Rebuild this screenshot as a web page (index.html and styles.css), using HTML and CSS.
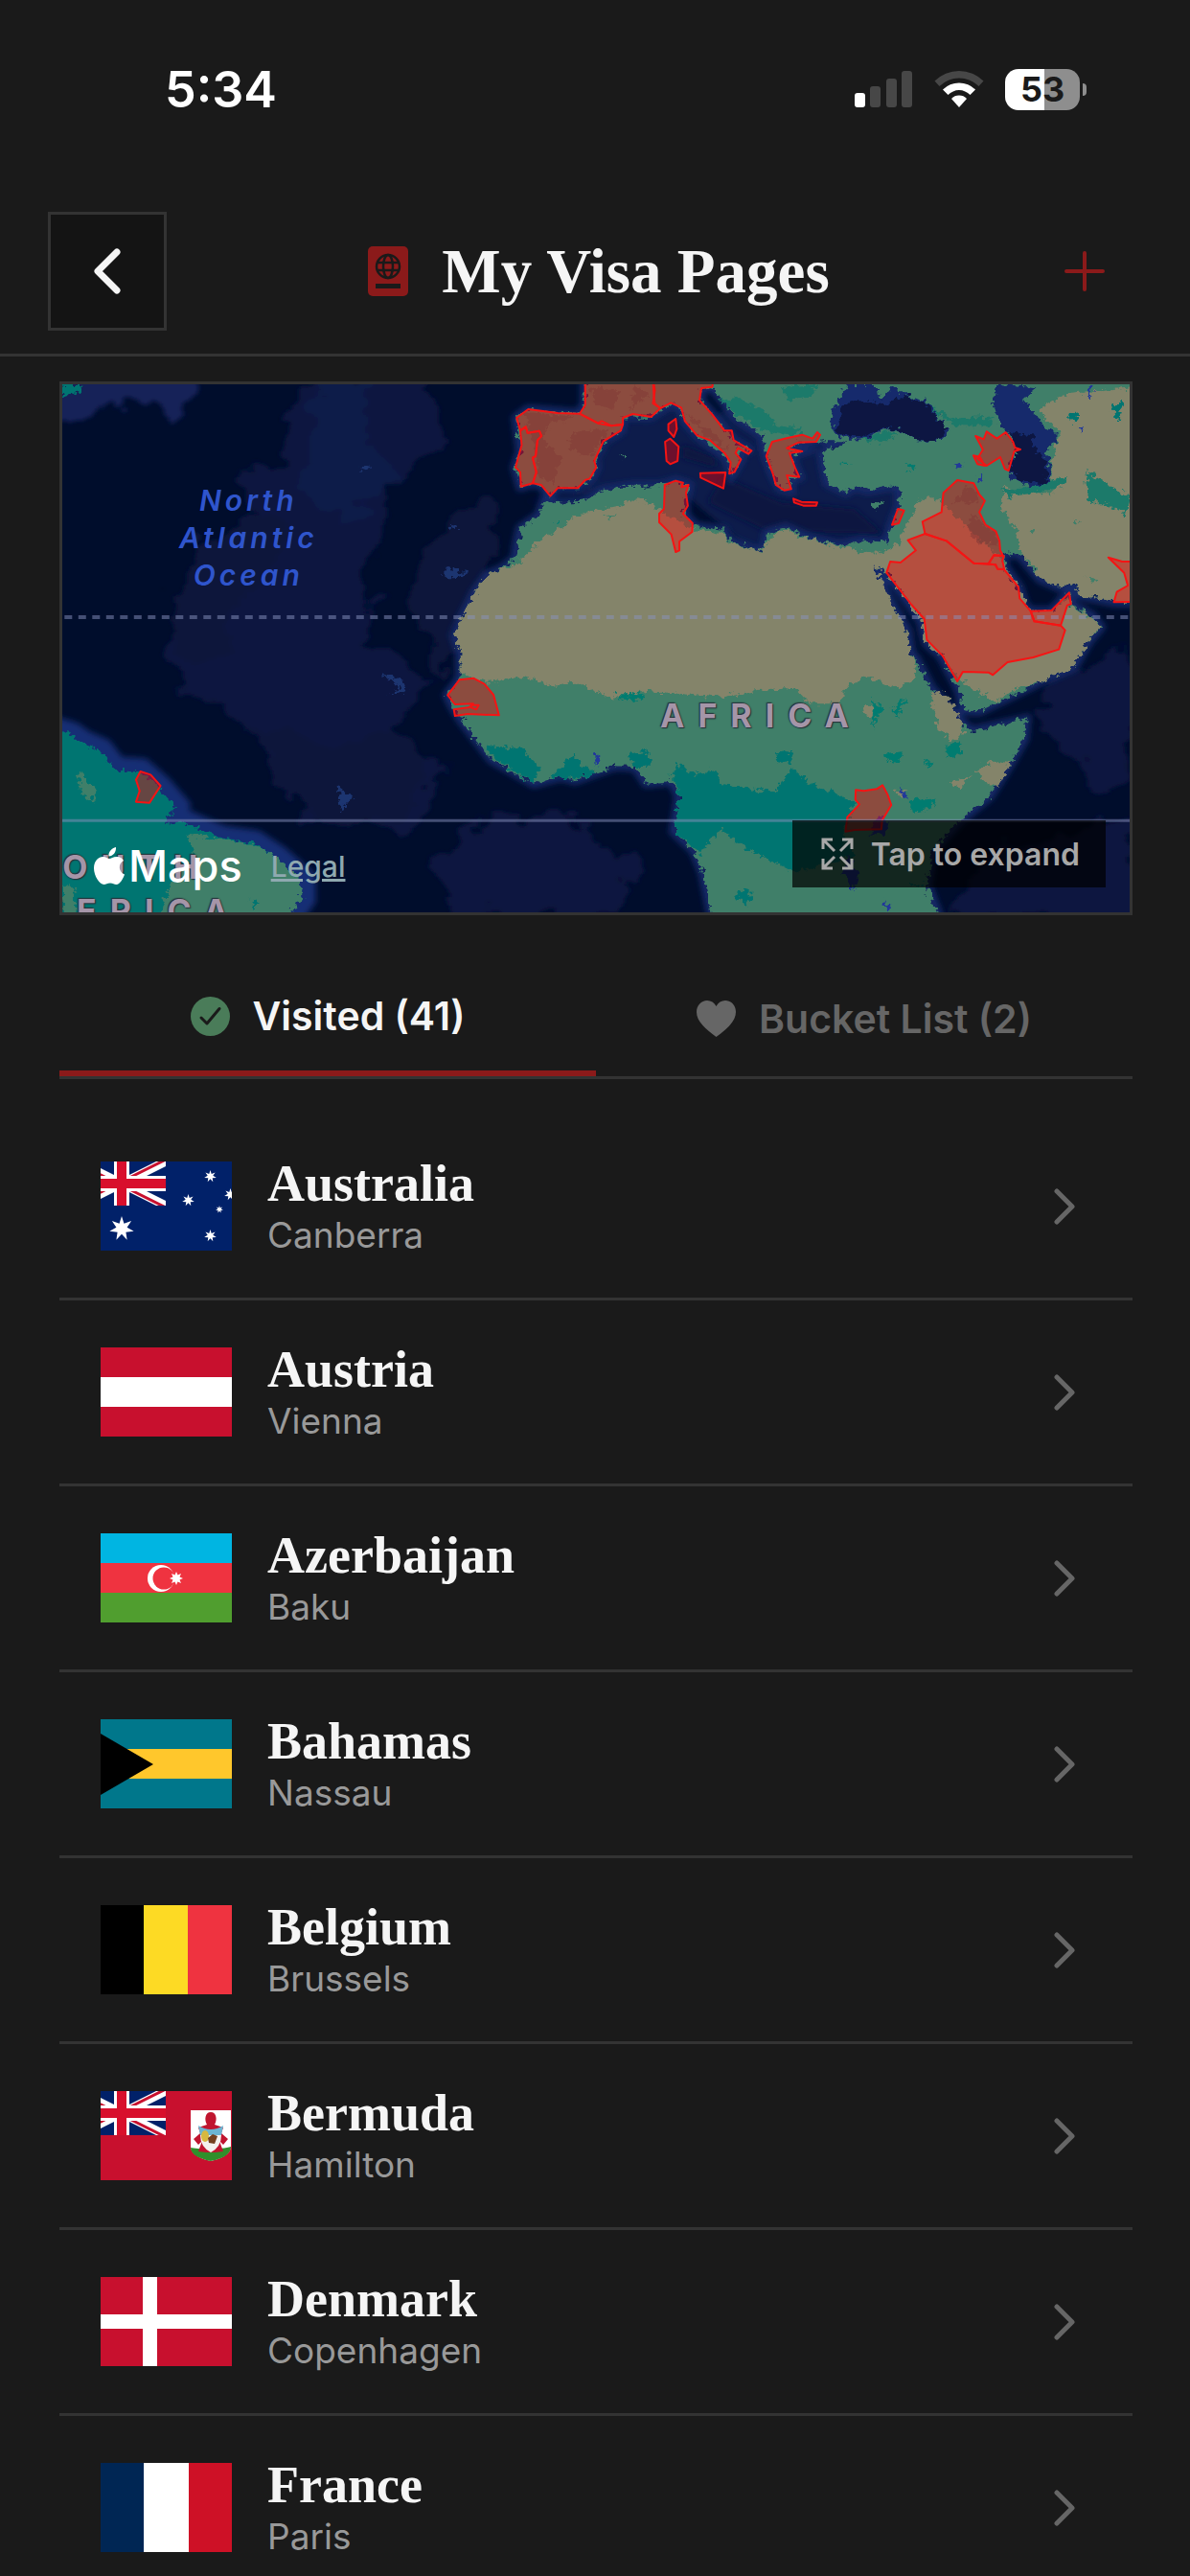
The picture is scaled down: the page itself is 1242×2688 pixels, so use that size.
FILE: index.html
```html
<!DOCTYPE html>
<html lang="en">
<head>
    <meta charset="UTF-8">
    <meta name="viewport" content="width=device-width, initial-scale=1.0">
    <title>My Visa Pages</title>
    <link rel="stylesheet" href="styles.css">
</head>
<body>
    <!-- Shared shapes -->
    <svg class="defs" aria-hidden="true">
        <symbol id="chevron" viewBox="0 0 22 38">
            <path d="M3 3 L19 19 L3 35" fill="none" stroke="#666" stroke-width="5" stroke-linecap="round" stroke-linejoin="round"/>
        </symbol>
        <symbol id="star7" viewBox="-10 -10 20 20">
            <polygon fill="#fff" points="0,-10 1.9,-4 7.8,-6.2 4.3,-1 9.7,2.2 3.4,2.8 4.3,9 0,4.4 -4.3,9 -3.4,2.8 -9.7,2.2 -4.3,-1 -7.8,-6.2 -1.9,-4"/>
        </symbol>
        <symbol id="canton" viewBox="0 0 68 46">
            <rect width="68" height="46" fill="#012169"/>
            <path d="M-24 0 L68 46 M-24 46 L68 0" stroke="#fff" stroke-width="9"/>
            <path d="M-24 2 L22 25 L68 48 M-24 44 L22 21 L68 -2" stroke="#c8102e" stroke-width="3"/>
            <path d="M22 0 V46 M0 23 H68" stroke="#fff" stroke-width="16"/>
            <path d="M22 0 V46 M0 23 H68" stroke="#d80f2c" stroke-width="10"/>
        </symbol>
    </svg>

    <div class="screen">
        <div class="status-bar">
            <span class="time">5:34</span>
            <div class="status-icons">
                <svg width="62" height="40" viewBox="0 0 62 40" aria-hidden="true">
                    <rect x="1" y="24" width="11" height="15" rx="3" fill="#fff"/>
                    <rect x="17" y="17" width="11" height="22" rx="3" fill="#474747"/>
                    <rect x="34" y="9" width="11" height="30" rx="3" fill="#474747"/>
                    <rect x="50" y="1" width="11" height="38" rx="3" fill="#474747"/>
                </svg>
                <svg width="52" height="40" viewBox="0 0 52 40" aria-hidden="true">
                    <path d="M0.500 11.500 A36 36 0 0 1 51.500 11.500 L46.500 17 A29 29 0 0 0 5.500 17 Z" fill="#474747"/>
                    <path d="M9 20.500 A24 24 0 0 1 43 20.500 L37.500 26 A16 16 0 0 0 14.500 26 Z" fill="#fff"/>
                    <path d="M18 30 A11 11 0 0 1 34 30 L26 39 Z" fill="#fff"/>
                </svg>
                <div class="battery"><span>53</span></div>
            </div>
        </div>

        <header class="header">
            <button class="back-button" aria-label="Back">
                <svg width="28" height="48" viewBox="0 0 28 48"><path d="M24 4 L4 24 L24 44" fill="none" stroke="#f5f5f5" stroke-width="7" stroke-linecap="round" stroke-linejoin="round"/></svg>
            </button>
            <div class="title">
                <svg width="42" height="52" viewBox="0 0 42 52" aria-hidden="true">
                    <rect width="42" height="52" rx="5" fill="#8b1a1a"/>
                    <g fill="none" stroke="#1a1a1a" stroke-width="2.500">
                        <circle cx="21" cy="21" r="12"/>
                        <ellipse cx="21" cy="21" rx="5" ry="12"/>
                        <path d="M10 17 H32 M10 25 H32"/>
                    </g>
                    <rect x="8" y="39" width="26" height="5" fill="#1a1a1a"/>
                </svg>
                <h1>My Visa Pages</h1>
            </div>
            <button class="add-button" aria-label="Add country">
                <svg width="44" height="44" viewBox="0 0 44 44"><path d="M22 3 V41 M3 22 H41" stroke="#8b1a1a" stroke-width="4" stroke-linecap="round"/></svg>
            </button>
        </header>

        <main class="content">
            <section class="map" aria-label="Map of visited countries">
                <svg class="map-canvas" viewBox="39 30 2911 1653" preserveAspectRatio="none" aria-hidden="true">
                    <defs>
                        <filter id="rough" x="-5%" y="-5%" width="110%" height="110%">
                            <feTurbulence type="fractalNoise" baseFrequency="0.06" numOctaves="3" seed="4"/>
                            <feDisplacementMap in="SourceGraphic" scale="34" xChannelSelector="R" yChannelSelector="G"/>
                        </filter>
                        <filter id="deep" x="-5%" y="-5%" width="110%" height="110%">
                            <feTurbulence type="fractalNoise" baseFrequency="0.012" numOctaves="4" seed="9"/>
                            <feDisplacementMap in="SourceGraphic" scale="130" xChannelSelector="R" yChannelSelector="G" result="d"/>
                            <feGaussianBlur in="d" stdDeviation="7"/>
                        </filter>
                        <filter id="soft"><feGaussianBlur stdDeviation="9"/></filter>
                        <path id="land" d="M1355 392 L1385 402 1457 398 1512 362 1587 348 1677 345 1712 332 1747 345 1737 400 1737 440 1767 475 1842 485 1857 515 1937 555 1957 535 1962 495 2012 478 2077 512 2157 535 2217 520 2287 528 2302 470 2322 410 2322 350 2292 350 2237 362 2197 350 2177 368 2127 340 2117 290 2112 250 2137 225 2170 222 2170 208 2120 208 2102 212 2047 212 2017 230 2057 240 2027 250 2037 290 2049 320 2022 330 2025 362 1997 355 1977 310 1959 255 1947 190 1877 135 1837 75 1812 38 1782 45 1777 80 1812 125 1847 175 1867 205 1919 240 1882 232 1889 265 1865 310 1852 260 1777 195 1737 145 1727 105 1699 90 1642 132 1567 130 1562 175 1520 205 1490 270 1495 290 1480 325 1445 355 1390 355 1370 380 1345 345 1320 340 1290 350 1275 290 1290 240 1278 135 1310 108 1450 122 1465 90 1465 0 2990 0 2990 715 2907 712 2812 690 2802 655 2757 665 2707 640 2677 600 2652 565 2607 555 2607 600 2647 665 2662 720 2677 740 2737 740 2782 685 2792 720 2847 755 2870 790 2837 835 2797 915 2697 965 2637 1000 2537 1055 2497 1050 2487 990 2437 880 2397 840 2382 770 2287 620 2287 590 2282 625 2242 572 2257 620 2307 730 2342 800 2352 870 2367 890 2407 980 2487 1080 2517 1115 2667 1078 2662 1140 2622 1220 2567 1320 2487 1395 2412 1490 2397 1600 2437 1720 1815 1720 1809 1683 1787 1560 1762 1490 1707 1430 1722 1320 1702 1272 1632 1280 1602 1228 1547 1225 1437 1270 1400 1258 1325 1280 1210 1205 1130 1085 1105 1040 1090 1003 1125 950 1125 870 1108 815 1130 760 1165 680 1200 625 1235 610 1275 575 1280 530 1290 480 1340 440 Z"/>
                        <path id="america" d="M0 1105 L60 1125 90 1150 140 1175 180 1235 250 1240 300 1290 345 1350 320 1410 370 1400 470 1450 560 1465 620 1510 690 1580 690 1640 640 1720 0 1720 Z"/>
                    </defs>

                    <!-- Ocean floor -->
                    <rect x="0" y="0" width="3000" height="1720" fill="#000d2c"/>
                    <g filter="url(#deep)">
                        <path fill="#0b163f" d="M1060 0 L700 0 640 260 520 300 560 560 430 640 330 860 380 1000 560 1100 640 1280 700 1400 1000 1420 1080 1240 960 1120 1040 960 860 830 900 560 940 330 1060 250 Z"/>
                        <path fill="#0e1d4a" d="M740 0 L900 0 860 220 950 330 800 460 700 400 Z"/>
                        <path fill="#11143a" d="M420 500 L640 440 620 640 480 720 500 860 380 900 340 700 Z M560 1080 L760 1160 1000 1140 1040 1280 900 1420 700 1380 Z M1020 560 L1200 380 1230 620 1060 960 980 700 Z"/>
                        <path fill="#0b163f" d="M1130 1420 L1380 1380 1620 1520 1520 1700 1120 1700 1040 1560 Z M2700 1000 L2960 840 2960 1250 2860 1300 2740 1140 Z M2560 1500 L2960 1380 2960 1700 2460 1700 Z"/>
                        <path fill="#132058" d="M0 0 L400 0 350 150 240 80 120 100 0 200 Z"/>
                    </g>
                    <g fill="#1d3470" filter="url(#rough)">
                        <path d="M840 290 L860 284 880 290 860 296 Z M1090 470 L1120 476 1108 490 Z M1080 605 L1150 620 1120 634 1080 634 Z M910 935 L970 960 980 990 935 1000 960 980 Z M790 1290 L830 1320 800 1370 Z"/>
                    </g>

                    <!-- Inland seas and shelf water -->
                    <path fill="#0c1c4c" filter="url(#soft)" d="M1300 400 L1460 360 1570 120 1700 80 1800 150 1900 60 2050 200 2330 330 2320 540 1940 570 1700 340 Z"/>
                    <path fill="#071340" filter="url(#soft)" d="M1840 320 L2000 400 2200 420 2280 500 1960 490 1800 400 Z M1730 220 L1820 260 1820 290 1730 260 Z"/>
                    <use href="#land" fill="none" stroke="#152a6a" stroke-width="26" filter="url(#soft)"/>
                    <use href="#america" fill="none" stroke="#182d75" stroke-width="80" filter="url(#soft)"/>

                    <g filter="url(#rough)">
                        <use href="#land" fill="#3f7f69"/>
                        <use href="#america" fill="#007571"/>
                        <path fill="#007571" d="M30 30 L90 30 85 55 40 72 Z"/>
                        <path fill="#3f7f69" d="M2245 405 L2275 398 2265 415 2250 420 Z M1560 250 L1578 256 1568 268 Z"/>

                        <!-- Sahara -->
                        <path fill="#84846a" d="M1285 590 L1340 520 1400 480 1440 440 1560 410 1600 390 1640 400 1690 440 1740 470 1767 485 1842 498 1857 522 1937 555 1957 540 1975 500 2012 485 2077 515 2150 537 2200 545 2250 560 2310 540 2340 480 2370 400 2400 378 2440 400 2500 470 2590 560 2607 600 2647 665 2677 740 2737 740 2782 700 2792 725 2847 760 2868 790 2837 835 2797 915 2697 965 2637 985 2580 1025 2520 980 2487 960 2437 880 2397 840 2382 770 2287 620 2250 590 2307 730 2342 800 2352 870 2367 920 2360 960 2300 980 2230 940 2177 980 2157 1030 2077 1030 2037 980 1937 990 1837 1010 1737 1000 1637 990 1537 1010 1437 965 1380 975 1300 945 1200 965 1125 935 1125 870 1108 815 1130 760 1165 680 1200 625 Z"/>
                        <!-- Iran and Central Asia -->
                        <path fill="#84846a" d="M2610 350 L2660 370 2740 370 2740 260 2760 180 2700 110 2780 60 2990 40 2990 715 2907 712 2812 690 2802 655 2757 665 2707 640 2677 600 2652 565 2640 480 2600 420 Z"/>
                        <path fill="#84846a" d="M2407 995 L2450 1000 2495 1090 2500 1130 2460 1145 2430 1110 Z M2535 1230 L2580 1208 2625 1215 2590 1290 2550 1275 Z M2455 1280 L2520 1255 2490 1290 Z M2310 1305 L2345 1300 2330 1325 Z M2225 1035 L2250 1040 2245 1070 2228 1065 Z"/>

                        <!-- Woodland -->
                        <path fill="#1f7a6b" d="M1830 80 L1880 70 1960 120 1990 160 2060 170 2040 190 1960 180 1900 140 Z M2000 40 L2100 30 2080 70 2020 80 Z M2220 200 L2290 175 2320 190 2260 215 Z M2320 80 L2400 90 2470 140 2580 130 2570 160 2480 160 2400 110 Z M2600 360 L2680 350 2780 320 2770 345 2700 370 2620 380 Z M2830 300 L2900 350 2950 380 2940 440 2880 400 2840 400 Z"/>
                        <path fill="#007571" d="M1707 1430 L1722 1320 1700 1250 1715 1215 1760 1250 1820 1240 1835 1280 1930 1300 1990 1300 2027 1230 2080 1280 2150 1310 2200 1340 2170 1430 2200 1500 2100 1540 2037 1560 1900 1480 1830 1420 1780 1500 Z M1190 1160 L1290 1170 1340 1230 1325 1280 1230 1210 Z M1370 1260 L1430 1190 1490 1250 1437 1265 Z M1580 1190 L1640 1180 1640 1230 1600 1230 Z M1985 1180 L2030 1175 2025 1215 1995 1210 Z"/>
                        <path fill="#007b70" d="M2280 1190 L2330 1180 2320 1215 2290 1210 Z M2450 1160 L2490 1150 2490 1190 2450 1200 Z M2350 1330 L2420 1325 2410 1360 2360 1370 Z M2390 1210 L2415 1215 2400 1230 Z M2250 1020 L2280 1040 2250 1100 Z M2300 1050 L2340 1010 2320 1070 Z M1550 1000 L1630 1000 1610 1020 1560 1015 Z M1380 460 L1400 455 1390 472 Z M2160 275 L2190 275 2175 285 Z M2340 280 L2370 285 2350 300 Z"/>
                        <path fill="#3f7f69" d="M85 1240 L110 1270 130 1300 120 1335 85 1300 Z M380 1440 L560 1470 620 1510 690 1580 690 1640 655 1700 300 1700 340 1580 400 1500 Z M39 1600 L75 1610 70 1700 39 1700 Z M1515 440 L1545 440 1530 452 Z M2680 490 L2695 480 2690 500 Z M2665 570 L2695 600 2690 620 Z M2830 635 L2865 640 2850 650 Z M2795 455 L2815 460 2800 470 Z M2190 525 L2230 520 2240 540 2210 558 Z"/>
                        <path fill="#007571" d="M1880 1610 L1920 1620 1910 1660 1880 1640 Z M2350 1590 L2385 1590 2380 1610 Z M550 1640 L580 1650 560 1670 Z M2780 130 L2810 120 2800 150 Z M2900 90 L2935 90 2915 150 Z"/>

                        <!-- Black Sea, Caspian, Gulf and lakes -->
                        <path fill="#142a6c" d="M2180 30 L2260 30 2270 80 2300 40 2340 62 2400 90 2459 180 2427 208 2367 205 2317 172 2277 172 2227 200 2150 195 2135 150 2150 90 Z"/>
                        <path fill="#0a1843" d="M2160 100 L2200 80 2280 90 2340 66 2397 95 2450 165 2430 205 2370 203 2317 170 2277 168 2227 192 2150 185 Z"/>
                        <path fill="#142a6c" d="M2590 30 L2700 40 2660 80 2700 130 2720 170 2750 180 2750 210 2720 240 2738 290 2735 340 2680 352 2620 320 2625 270 2650 230 2600 160 2575 90 Z"/>
                        <path fill="#0a1843" d="M2620 180 L2680 190 2700 240 2725 280 2720 345 2650 330 2625 300 2640 240 Z"/>
                        <path fill="#20389a" d="M2470 285 L2500 275 2490 295 Z M2535 300 L2552 330 2540 335 Z M2810 160 L2828 170 2820 185 Z M2840 30 L2850 30 2845 75 2838 75 Z M2265 1380 L2300 1400 2280 1440 2240 1430 Z M2185 1500 L2210 1570 2195 1620 2170 1560 Z M2280 1640 L2300 1670 2290 1690 Z M2322 1280 L2345 1330 2330 1325 Z M1493 1190 L1503 1190 1503 1225 1493 1225 Z"/>
                    </g>

                    <!-- Darker ground under the visited countries -->
                    <path fill="#2f5f5a" opacity="0.500" filter="url(#rough)" d="M1300 120 L1440 130 1370 150 1350 200 1400 260 1380 340 1340 320 1320 200 Z M1430 180 L1530 170 1480 260 1420 230 Z M1480 40 L1560 50 1540 110 1490 90 Z M1600 30 L1640 60 1590 110 Z M1740 120 L1830 200 1860 240 1800 200 Z M2500 350 L2535 370 2540 400 2470 400 Z M2520 440 L2590 500 2590 540 2530 520 2505 480 Z"/>

                    <!-- Visited countries -->
                    <g class="visited">
                        <path d="M1278 135 L1310 108 1390 120 1450 122 1500 152 1535 160 1568 156 1562 175 1515 208 1490 270 1495 290 1478 325 1465 330 1445 355 1390 355 1370 380 1345 345 1322 340 1332 305 1322 260 1330 255 1335 205 1346 192 1340 176 1308 182 1303 163 1288 175 Z"/>
                        <path d="M1288 175 L1303 163 1308 182 1340 176 1346 192 1335 205 1330 255 1322 260 1332 305 1322 340 1290 350 1288 305 1275 290 1292 220 Z"/>
                        <path d="M1465 10 L1465 95 1450 122 1500 152 1510 145 1537 160 1568 156 1568 135 1595 123 1645 132 1670 105 1650 90 1655 50 1650 10 Z"/>
                        <path d="M1650 10 L1652 60 1655 90 1670 105 1699 88 1727 103 1737 145 1770 190 1805 205 1845 245 1862 275 1858 310 1872 305 1890 265 1875 245 1882 230 1910 248 1919 238 1870 205 1865 175 1845 175 1812 125 1777 80 1782 42 1812 38 1815 10 Z"/>
                        <path d="M1712 138 L1692 155 1692 175 1707 195 1715 170 Z M1697 200 L1683 210 1687 270 1697 280 1717 270 1720 225 Z M1779 308 L1848 306 1842 356 1780 322 Z"/>
                        <path d="M1959 255 L1975 210 2017 198 2057 188 2085 200 2098 180 2106 188 2095 210 2047 212 2015 230 2057 240 2022 245 2037 290 2049 320 2015 315 2027 358 2008 362 1985 345 1977 310 Z M2033 388 L2055 398 2098 400 2095 410 2060 410 2035 400 Z"/>
                        <path d="M1682 345 L1712 332 1732 338 1728 352 1747 345 1740 370 1745 410 1732 435 1758 465 1757 492 1722 522 1722 550 1712 555 1700 500 1667 462 1667 435 1680 420 Z"/>
                        <path d="M2318 420 L2335 425 2320 465 2302 470 Z"/>
                        <path d="M2530 192 L2552 202 2560 178 2588 200 2612 180 2632 210 2637 228 2652 234 2635 240 2620 300 2610 295 2597 258 2560 285 2535 262 2550 235 Z M2524 253 L2542 258 2555 285 2535 280 Z"/>
                        <path d="M2480 330 L2525 340 2540 375 2555 395 2540 430 2557 470 2585 490 2595 520 2597 550 2605 567 2580 565 2565 592 2525 590 2450 520 2392 498 2385 460 2437 430 2442 370 Z"/>
                        <path d="M2392 498 L2450 520 2525 590 2585 595 2590 608 2608 610 2647 665 2650 700 2680 740 2690 772 2762 785 2774 800 2757 860 2687 885 2617 900 2577 940 2565 932 2495 930 2480 960 2440 880 2397 830 2390 765 2355 720 2287 620 2297 585 2325 588 2367 550 2345 518 Z"/>
                        <path d="M2580 565 L2607 568 2603 582 2608 608 2590 608 2583 595 2565 592 Z M2680 740 L2737 738 2785 682 2790 718 2780 722 2762 785 2690 772 Z M2892 572 L2930 585 2980 585 2980 710 2907 712 2915 680 2945 660 2935 620 Z"/>
                        <path d="M1090 1003 L1122 955 1160 950 1190 968 1215 1002 1230 1066 1145 1062 1110 1068 1107 1048 1145 1042 1160 1034 1175 1034 1168 1048 1150 1040 1160 1030 1110 1032 Z"/>
                        <path d="M2203 1300 L2225 1303 2260 1297 2276 1285 2290 1315 2300 1347 2275 1395 2273 1423 2200 1425 2175 1430 2180 1385 2213 1345 2202 1330 Z"/>
                        <path d="M252 1242 L280 1252 307 1287 277 1340 240 1337 250 1303 240 1268 Z"/>
                    </g>

                    <path class="tropic" d="M45 759 H2950"/>
                    <path class="equator" d="M39 1396 H2950"/>
                </svg>

                <span class="map-label ocean-label">North<br>Atlantic<br>Ocean</span>
                <span class="map-label africa-label">AFRICA</span>
                <span class="map-label south-label">SOUTH</span>
                <span class="map-label america-label">AMERICA</span>

                <div class="attribution">
                    <div class="brand">
                        <svg width="32" height="40" viewBox="0 0 32 40" aria-hidden="true">
                            <path fill="#fff" d="M23 0 C23.500 5 20 9.500 15.500 9.500 C15 5 18.500 1 23 0 Z M16 12 C18 12 20 10 24 10 C27 10 29.500 11.500 31 14 C25 17 25.500 26 32 28.500 C30.500 33 27 39 23.500 39 C21 39 20 37.500 17 37.500 C14 37.500 12.500 39 10.500 39 C6 39 0 30 0 22 C0 14 5 10 9.500 10 C12.500 10 14.500 12 16 12 Z"/>
                        </svg>
                        <span>Maps</span>
                    </div>
                    <a class="legal" href="#legal">Legal</a>
                </div>

                <button class="expand-button">
                    <svg width="34" height="34" viewBox="0 0 34 34" fill="none" stroke="#a8a8a8" stroke-width="3" aria-hidden="true">
                        <path d="M2 12 V2 H12 M2 2 L14 14 M22 2 H32 V12 M32 2 L20 14 M2 22 V32 H12 M2 32 L14 20 M22 32 H32 V22 M32 32 L20 20"/>
                    </svg>
                    Tap to expand
                </button>
            </section>

            <div class="tabs" role="tablist">
                <button class="tab active" role="tab" aria-selected="true">
                    <svg width="41" height="41" viewBox="0 0 41 41" aria-hidden="true">
                        <circle cx="20.500" cy="20.500" r="20.500" fill="#4a7c59"/>
                        <path d="M11 22 L17 28 L30 12.500" fill="none" stroke="#1a1a1a" stroke-width="3" stroke-linecap="round" stroke-linejoin="round"/>
                    </svg>
                    Visited (41)
                </button>
                <button class="tab" role="tab" aria-selected="false">
                    <svg width="41" height="38" viewBox="0 0 41 38" aria-hidden="true">
                        <path fill="#666" d="M20.500 38 C10 30 0 22 0 12 C0 5 5 0 11 0 C15 0 18.500 2 20.500 6 C22.500 2 26 0 30 0 C36 0 41 5 41 12 C41 22 31 30 20.500 38 Z"/>
                    </svg>
                    Bucket List (2)
                </button>
            </div>

            <ul class="countries">
                <li>
                    <a class="country" href="#australia">
                        <svg class="flag" viewBox="0 0 137 93" aria-hidden="true">
                            <rect width="137" height="93" fill="#012169"/>
                            <use href="#canton" width="68" height="46"/>
                            <use href="#star7" x="9" y="57" width="26" height="26"/>
                            <use href="#star7" x="108" y="9" width="13" height="13"/>
                            <use href="#star7" x="85" y="34" width="13" height="13"/>
                            <use href="#star7" x="129" y="28" width="13" height="13"/>
                            <use href="#star7" x="108" y="71" width="13" height="13"/>
                            <use href="#star7" x="120" y="46" width="8" height="8"/>
                        </svg>
                        <span class="info">
                            <span class="name">Australia</span>
                            <span class="capital">Canberra</span>
                        </span>
                        <svg class="chevron" aria-hidden="true"><use href="#chevron"/></svg>
                    </a>
                </li>
                <li>
                    <a class="country" href="#austria">
                        <svg class="flag" viewBox="0 0 137 93" aria-hidden="true">
                            <rect width="137" height="93" fill="#c8102e"/>
                            <rect y="31" width="137" height="31" fill="#fff"/>
                        </svg>
                        <span class="info">
                            <span class="name">Austria</span>
                            <span class="capital">Vienna</span>
                        </span>
                        <svg class="chevron" aria-hidden="true"><use href="#chevron"/></svg>
                    </a>
                </li>
                <li>
                    <a class="country" href="#azerbaijan">
                        <svg class="flag" viewBox="0 0 137 93" aria-hidden="true">
                            <rect width="137" height="31" fill="#00b5e2"/>
                            <rect y="31" width="137" height="31" fill="#ef3340"/>
                            <rect y="62" width="137" height="31" fill="#509e2f"/>
                            <circle cx="63" cy="47" r="14" fill="#fff"/>
                            <circle cx="66" cy="47" r="11.500" fill="#ef3340"/>
                            <polygon fill="#fff" points="79,40 80.500,43.500 84,42 82.500,45.500 86,47 82.500,48.500 84,52 80.500,50.500 79,54 77.500,50.500 74,52 75.500,48.500 72,47 75.500,45.500 74,42 77.500,43.500"/>
                        </svg>
                        <span class="info">
                            <span class="name">Azerbaijan</span>
                            <span class="capital">Baku</span>
                        </span>
                        <svg class="chevron" aria-hidden="true"><use href="#chevron"/></svg>
                    </a>
                </li>
                <li>
                    <a class="country" href="#bahamas">
                        <svg class="flag" viewBox="0 0 137 93" aria-hidden="true">
                            <rect width="137" height="93" fill="#00778b"/>
                            <rect y="31" width="137" height="31" fill="#ffc72c"/>
                            <path d="M0 15 L55 47 L0 79 Z" fill="#000"/>
                        </svg>
                        <span class="info">
                            <span class="name">Bahamas</span>
                            <span class="capital">Nassau</span>
                        </span>
                        <svg class="chevron" aria-hidden="true"><use href="#chevron"/></svg>
                    </a>
                </li>
                <li>
                    <a class="country" href="#belgium">
                        <svg class="flag" viewBox="0 0 137 93" aria-hidden="true">
                            <rect width="46" height="93" fill="#000"/>
                            <rect x="45" width="46" height="93" fill="#fdda24"/>
                            <rect x="91" width="46" height="93" fill="#ef3340"/>
                        </svg>
                        <span class="info">
                            <span class="name">Belgium</span>
                            <span class="capital">Brussels</span>
                        </span>
                        <svg class="chevron" aria-hidden="true"><use href="#chevron"/></svg>
                    </a>
                </li>
                <li>
                    <a class="country" href="#bermuda">
                        <svg class="flag" viewBox="0 0 137 93" aria-hidden="true">
                            <rect width="137" height="93" fill="#c8102e"/>
                            <use href="#canton" width="68" height="46"/>
                            <path d="M94 20 H136 V58 C136 66 125 71 115 73 C105 71 94 66 94 58 Z" fill="#fff"/>
                            <path d="M94 59 C102 61 128 61 136 58 C136 67 125 71 115 73 C105 71 94 67 94 59 Z" fill="#2f8f2b"/>
                            <path d="M111 35 C108 30 109 22 115 22 C121 22 122 30 119 35 L128 38 L126 44 L133 50 L128 56 L124 52 L128 63 L120 64 H110 L102 63 L106 52 L102 56 L97 50 L104 44 L102 38 Z" fill="#c0152f"/>
                            <path d="M102 36 Q115 44 128 36 L126 46 H104 Z" fill="#6cb5d2"/>
                            <path d="M104 46 H126 Q126 58 115 64 Q104 58 104 46 Z" fill="#f4f1ee"/>
                            <ellipse cx="109" cy="47" rx="4" ry="6" fill="#d8b840"/>
                            <path d="M112 49 L117 45 L122 47 L119 55 L113 54 Z" fill="#74401f"/>
                        </svg>
                        <span class="info">
                            <span class="name">Bermuda</span>
                            <span class="capital">Hamilton</span>
                        </span>
                        <svg class="chevron" aria-hidden="true"><use href="#chevron"/></svg>
                    </a>
                </li>
                <li>
                    <a class="country" href="#denmark">
                        <svg class="flag" viewBox="0 0 137 93" aria-hidden="true">
                            <rect width="137" height="93" fill="#c8102e"/>
                            <path d="M44 0 H59 V39 H137 V54 H59 V93 H44 V54 H0 V39 H44 Z" fill="#fff"/>
                        </svg>
                        <span class="info">
                            <span class="name">Denmark</span>
                            <span class="capital">Copenhagen</span>
                        </span>
                        <svg class="chevron" aria-hidden="true"><use href="#chevron"/></svg>
                    </a>
                </li>
                <li>
                    <a class="country" href="#france">
                        <svg class="flag" viewBox="0 0 137 93" aria-hidden="true">
                            <rect width="46" height="93" fill="#002654"/>
                            <rect x="45" width="47" height="93" fill="#fff"/>
                            <rect x="92" width="45" height="93" fill="#ce1126"/>
                        </svg>
                        <span class="info">
                            <span class="name">France</span>
                            <span class="capital">Paris</span>
                        </span>
                        <svg class="chevron" aria-hidden="true"><use href="#chevron"/></svg>
                    </a>
                </li>
            </ul>
        </main>
    </div>
</body>
</html>
```

FILE: styles.css
```css
/* Reset */
* {
    margin: 0;
    padding: 0;
    box-sizing: border-box;
}

body {
    font-family: Inter, "Liberation Sans", sans-serif;
    background-color: #1a1a1a;
    color: #f5f5f5;
}

button {
    font: inherit;
    color: inherit;
    background: none;
    border: none;
    cursor: pointer;
}

svg {
    display: block;
    flex-shrink: 0;
}

.defs {
    position: absolute;
    width: 0;
    height: 0;
}

.screen {
    display: flex;
    flex-direction: column;
    height: 100vh;
    overflow: hidden;
}

/* Status bar */
.status-bar {
    display: flex;
    justify-content: space-between;
    align-items: center;
    height: 186px;
    padding: 0 115px 0 172px;
}

.time {
    font-size: 52px;
    font-weight: 600;
    color: #fff;
}

.status-icons {
    display: flex;
    align-items: center;
    gap: 22px;
}

.battery {
    position: relative;
    width: 78px;
    height: 43px;
    border-radius: 14px;
    background: linear-gradient(to right, #fff 53%, #8e8e8e 53%);
    color: #1a1a1a;
    font-size: 36px;
    font-weight: 700;
    line-height: 43px;
    text-align: center;
}

.battery::after {
    content: "";
    position: absolute;
    top: 15px;
    right: -7px;
    width: 4px;
    height: 13px;
    border-radius: 0 4px 4px 0;
    background: #8e8e8e;
}

/* Header */
.header {
    display: flex;
    align-items: center;
    padding: 35px 54px 24px 50px;
    border-bottom: 3px solid #333;
}

.back-button,
.add-button {
    display: flex;
    align-items: center;
    justify-content: center;
    width: 124px;
    height: 124px;
}

.back-button {
    background-color: #141414;
    border: 3px solid #333;
}

.add-button {
    width: 112px;
}

.title {
    display: flex;
    flex: 1;
    align-items: center;
    justify-content: center;
    gap: 35px;
}

h1 {
    font-family: Georgia, "Liberation Serif", serif;
    font-size: 65px;
    font-weight: 700;
    line-height: 72px;
}

/* Map */
.content {
    flex: 1;
    min-height: 0;
    padding: 26px 60px 0 62px;
}

.map {
    position: relative;
    height: 557px;
    border: 3px solid #333;
    overflow: hidden;
}

.map-canvas {
    width: 100%;
    height: 100%;
}

.visited path {
    fill: rgba(255, 0, 0, 0.4);
    stroke: #f51414;
    stroke-width: 2px;
    stroke-linejoin: round;
    vector-effect: non-scaling-stroke;
}

.tropic,
.equator {
    fill: none;
    stroke: rgba(135, 145, 190, 0.5);
    stroke-width: 4px;
    vector-effect: non-scaling-stroke;
}

.tropic {
    stroke-dasharray: 8 6.5;
}

.equator {
    stroke-width: 3px;
}

.map-label {
    position: absolute;
    color: #a595a8;
    font-weight: 700;
    font-size: 34px;
    line-height: 40px;
    letter-spacing: 14px;
    text-shadow: 0 0 2px #26333b, 1px 1px 1px #26333b, -1px -1px 1px #26333b;
}

.ocean-label {
    top: 102px;
    left: 122px;
    color: #2f55cc;
    font-size: 30px;
    font-weight: 600;
    font-style: italic;
    line-height: 39px;
    letter-spacing: 4px;
    text-align: center;
    text-shadow: none;
}

.africa-label {
    top: 326px;
    left: 624px;
}

.south-label {
    top: 484px;
    left: -36px;
}

.america-label {
    top: 530px;
    left: -70px;
}

.attribution {
    position: absolute;
    left: 33px;
    bottom: 24px;
    display: flex;
    align-items: center;
    gap: 30px;
}

.brand {
    display: flex;
    align-items: center;
    gap: 4px;
    color: #fff;
    font-size: 45px;
    font-weight: 500;
    line-height: 48px;
}

.legal {
    color: #8fa9b0;
    font-size: 30px;
    font-weight: 500;
    line-height: 40px;
}

.expand-button {
    position: absolute;
    right: 25px;
    bottom: 26px;
    display: flex;
    align-items: center;
    gap: 18px;
    height: 70px;
    padding: 0 27px 0 30px;
    background-color: rgba(0, 0, 0, 0.7);
    color: #a8a8a8;
    font-size: 32px;
    font-weight: 600;
}

/* Tabs */
.tabs {
    display: flex;
    margin-top: 48px;
    border-bottom: 3px solid #333;
}

.tab {
    display: flex;
    flex: 1;
    align-items: center;
    justify-content: center;
    gap: 24px;
    height: 120px;
    color: #666;
    font-size: 41px;
    font-weight: 600;
}

.tab.active {
    color: #f5f5f5;
    border-bottom: 6px solid #8b1a1a;
}

/* Country list */
.countries {
    list-style: none;
    margin-top: 37px;
}

.country {
    display: flex;
    align-items: center;
    gap: 37px;
    height: 194px;
    padding: 0 60px 0 43px;
    border-bottom: 3px solid #333;
    color: inherit;
    text-decoration: none;
}

.flag {
    width: 137px;
    height: 93px;
}

.info {
    display: flex;
    flex: 1;
    flex-direction: column;
}

.name {
    font-family: Georgia, "Liberation Serif", serif;
    font-size: 54px;
    font-weight: 700;
    line-height: 60px;
}

.capital {
    color: #999;
    font-size: 37px;
    line-height: 48px;
}

.chevron {
    width: 22px;
    height: 38px;
}
```
